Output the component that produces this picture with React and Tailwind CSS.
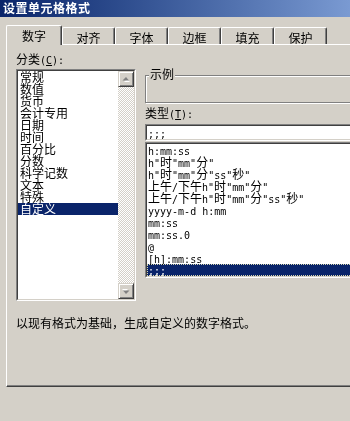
import React from 'react';

const CJK = /([\u3000-\u303f\u4e00-\u9fff\uff00-\uffef]+)/;

// SimSun-ish mix: CJK runs 12px, ASCII runs half-width
function Mixed({ text }) {
  return text
    .split(CJK)
    .filter(Boolean)
    .map((part, i) =>
      CJK.test(part) ? (
        <span key={i} className="font-['Noto_Sans_CJK_SC',sans-serif] text-[12px]">{part}</span>
      ) : (
        <span key={i} className="font-['DejaVu_Sans_Mono',monospace] text-[10px]">{part}</span>
      )
    );
}

const tabs = ['数字', '对齐', '字体', '边框', '填充', '保护'];

const categories = ['常规', '数值', '货币', '会计专用', '日期', '时间', '百分比', '分数', '科学记数', '文本', '特殊', '自定义'];

const types = [
  'h:mm:ss',
  'h"时"mm"分"',
  'h"时"mm"分"ss"秒"',
  '上午/下午h"时"mm"分"',
  '上午/下午h"时"mm"分"ss"秒"',
  'yyyy-m-d h:mm',
  'mm:ss',
  'mm:ss.0',
  '@',
  '[h]:mm:ss',
  ';;;',
];

function Arrow({ down }) {
  return (
    <svg width="8" height="5" viewBox="0 0 8 5" className={down ? 'rotate-180' : ''}>
      <path d="M4 1 L7 4 L1 4 Z" fill="#fff" transform="translate(1 1)" />
      <path d="M4 0 L7 3.5 L0.5 3.5 Z" fill="#808080" />
    </svg>
  );
}

function ScrollButton({ down }) {
  return (
    <div className="w-[16px] h-[16px] bg-[#d4d0c8] border border-t-[#d4d0c8] border-l-[#d4d0c8] border-r-[#404040] border-b-[#404040] shadow-[inset_1px_1px_0_#fff,inset_-1px_-1px_0_#808080] flex items-center justify-center">
      <Arrow down={down} />
    </div>
  );
}

function Sunken({ className, children }) {
  return (
    <div className={`border border-t-[#808080] border-l-[#808080] border-r-white border-b-white ${className}`}>
      <div className="h-full border border-t-[#404040] border-l-[#404040] border-r-[#d4d0c8] border-b-[#d4d0c8] bg-white">
        {children}
      </div>
    </div>
  );
}

export default function App() {
  return (
    <div className="w-[350px] h-[421px] overflow-hidden bg-[#d4d0c8] text-black text-[12px] leading-[12px] font-['Noto_Sans_CJK_SC',sans-serif] antialiased [will-change:transform]">
      {/* Title bar */}
      <div className="h-[17px] bg-linear-to-r from-[#0a246a] to-[#7a9ad2] pl-[3px] pt-[2px] text-white font-bold tracking-[0.5px]">
        设置单元格格式
      </div>

      {/* Tabs */}
      <div className="mt-[8px] h-[19px] flex items-end pl-[6px] relative z-10">
        {tabs.map((t, i) =>
          i === 0 ? (
            <div
              key={t}
              className="w-[56px] h-[20px] -mb-px bg-[#d4d0c8] border-l border-t border-white border-r border-r-[#404040] rounded-t-[2px] shadow-[inset_-1px_0_0_#808080] pt-[4px] text-center"
            >
              {t}
            </div>
          ) : (
            <div
              key={t}
              className="w-[53px] h-[17px] bg-[#d4d0c8] border-l border-t border-white border-r border-r-[#404040] rounded-t-[2px] shadow-[inset_-1px_0_0_#808080] pt-[4px] text-center"
            >
              {t}
            </div>
          )
        )}
      </div>

      {/* Tab panel */}
      <div className="ml-[6px] w-[400px] h-[343px] border-l border-t border-white border-b border-b-[#404040] shadow-[inset_0_-1px_0_#808080]">
        <div className="flex">
          {/* Category */}
          <div className="pl-[9px] pt-[8px]">
            <div className="h-[12px] whitespace-pre">
              分类<Mixed text="(" /><span className="underline font-['DejaVu_Sans_Mono',monospace] text-[10px]">C</span><Mixed text="):" />
            </div>
            <Sunken className="mt-[4px] w-[120px] h-[232px]">
              <div className="flex h-full">
                <div className="flex-1">
                  {categories.map((c, i) => (
                    <div
                      key={c}
                      className={`h-[12px] leading-[12px] pl-[2px] ${i === categories.length - 1 ? 'bg-[#0a246a] text-white' : ''}`}
                    >
                      {c}
                    </div>
                  ))}
                </div>
                <div className="w-[16px] flex flex-col bg-[repeating-conic-gradient(#ffffff_0_25%,#d4d0c8_0_50%)] bg-[length:2px_2px]">
                  <ScrollButton />
                  <div className="flex-1" />
                  <ScrollButton down />
                </div>
              </div>
            </Sunken>
          </div>

          {/* Right column */}
          <div className="ml-[9px] flex-1">
            <div className="relative mt-[30px] h-[28px] border border-[#808080] shadow-[inset_1px_1px_0_#fff,1px_1px_0_#fff]">
              <span className="absolute -top-[8px] left-[3px] px-[1px] bg-[#d4d0c8]">示例</span>
            </div>
            <div className="mt-[4px] h-[12px] whitespace-pre">
              类型<Mixed text="(" /><span className="underline font-['DejaVu_Sans_Mono',monospace] text-[10px]">T</span><Mixed text="):" />
            </div>
            <Sunken className="mt-[5px] h-[17px]">
              <div className="pl-[1px] pt-[1px] h-[12px] leading-[12px] whitespace-pre">
                <Mixed text=";;;" />
              </div>
            </Sunken>
            <Sunken className="mt-[1px] h-[136px]">
              {types.map((t, i) => (
                <div
                  key={t}
                  className={`h-[12px] leading-[12px] pl-[1px] whitespace-pre ${i === types.length - 1 ? 'bg-[#0a246a] text-white outline-1 outline-dotted outline-[#d8d8b0] -outline-offset-1' : ''}`}
                >
                  <Mixed text={t} />
                </div>
              ))}
            </Sunken>
          </div>
        </div>

        <div className="pl-[9px] mt-[16px] h-[12px] whitespace-pre">以现有格式为基础，生成自定义的数字格式。</div>
      </div>
    </div>
  );
}
